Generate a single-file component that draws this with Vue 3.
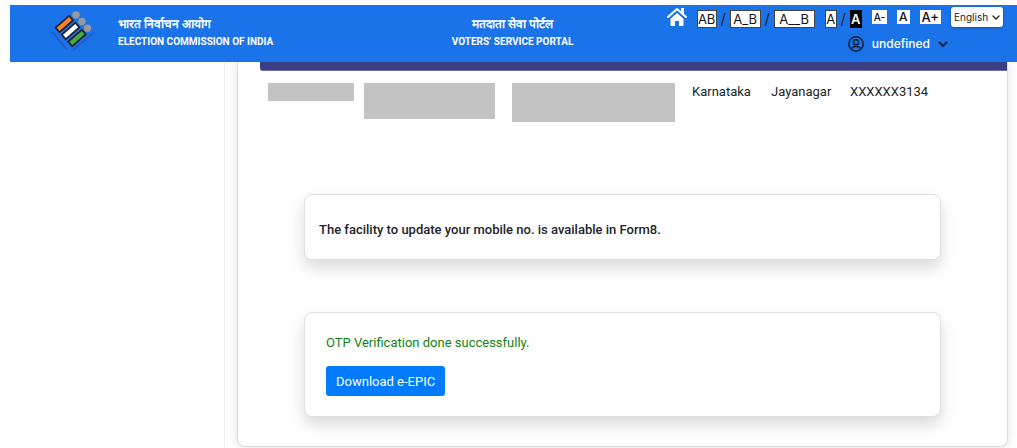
<script setup>
import {ref} from 'vue'

const language=ref('English')
const userName=ref('undefined')
const spacing=[
    {text:'AB',name:'tight'},
    {text:'A_B',name:'wide'},
    {text:'A__B',name:'wider'}
]
const sizes=[
    {text:'A-',name:'small'},
    {text:'A',name:'normal'},
    {text:'A+',name:'large'}
]
const voter={
    state:'Karnataka',
    constituency:'Jayanagar',
    mobile:'XXXXXX3134'
}
</script>
<template>
    <div class="page">
        <header class="topbar">
            <div class="brand">
                <svg class="logo" viewBox="0 0 44 42" aria-hidden="true">
                    <g fill="#98999d">
                        <circle cx="25" cy="3.900" r="3.700"/>
                        <circle cx="31" cy="10.500" r="3.700"/>
                        <circle cx="36.500" cy="17.300" r="3.700"/>
                    </g>
                    <g stroke="#20242e" stroke-width="1.800">
                        <rect x="-9" y="-3" width="18" height="6" fill="#f5822a" transform="translate(13.300 13) rotate(-41)"/>
                        <rect x="-9" y="-3" width="18" height="6" fill="#fff" transform="translate(19.600 20) rotate(-41)"/>
                        <rect x="-9" y="-3" width="18" height="6" fill="#43ae49" transform="translate(26 27) rotate(-41)"/>
                    </g>
                    <g fill="none" stroke="#2c4fb8" stroke-width="1.800" stroke-dasharray="1.500 .6">
                        <path d="M.800 20.500l15 18"/>
                        <path d="M22 39l20-16.500"/>
                    </g>
                </svg>
                <div class="title">
                    <p class="hindi">भारत निर्वाचन आयोग</p>
                    <p>ELECTION COMMISSION OF INDIA</p>
                </div>
            </div>
            <div class="title portal">
                <p class="hindi">मतदाता सेवा पोर्टल</p>
                <p>VOTERS’ SERVICE PORTAL</p>
            </div>
            <div class="controls">
                <div class="tools">
                    <a href="#" class="home" aria-label="Home">
                        <svg viewBox="0 0 20 19" aria-hidden="true">
                            <path d="M1 10L10 2l9 8" fill="none" stroke="#fff" stroke-width="2" stroke-linecap="round" stroke-linejoin="round"/>
                            <path d="M14 1h3v6l-3-2.600z" fill="#fff"/>
                            <path d="M3.500 11.800L10 6l6.500 5.800V18q0 1-1 1H12v-5H8v5H4.500q-1 0-1-1z" fill="#fff"/>
                        </svg>
                    </a>
                    <div class="group">
                        <template v-for="(item,index) in spacing" :key="item.name">
                            <span v-if="index>0" class="slash">/</span>
                            <button type="button" class="box" :class="item.name">{{item.text}}</button>
                        </template>
                    </div>
                    <div class="group">
                        <button type="button" class="box" aria-label="Light theme">A</button>
                        <span class="slash">/</span>
                        <button type="button" class="box dark" aria-label="Dark theme">A</button>
                    </div>
                    <div class="sizes">
                        <button v-for="item in sizes" :key="item.name" type="button" :class="item.name">{{item.text}}</button>
                    </div>
                    <div class="language">
                        <select v-model="language" aria-label="Language">
                            <option>English</option>
                        </select>
                        <svg viewBox="0 0 8 5" aria-hidden="true">
                            <path d="M1 1l3 3 3-3" fill="none" stroke="#222" stroke-width="1.300" stroke-linecap="round"/>
                        </svg>
                    </div>
                </div>
                <button type="button" class="user">
                    <svg class="avatar" viewBox="0 0 16 16" fill="none" stroke="#10213d" stroke-width="1.500" aria-hidden="true">
                        <circle cx="8" cy="8" r="7.200"/>
                        <circle cx="8" cy="6.300" r="2.600"/>
                        <path d="M3 13q1.500-2.600 5-2.600t5 2.600"/>
                    </svg>
                    <span>{{userName}}</span>
                    <svg class="arrow" viewBox="0 0 10 6" aria-hidden="true">
                        <path d="M1 1l4 4 4-4" fill="none" stroke="#10213d" stroke-width="1.800"/>
                    </svg>
                </button>
            </div>
        </header>
        <div class="content">
            <aside class="sidebar"></aside>
            <main class="main">
                <section class="card">
                    <div class="table_box">
                        <div class="table_head"></div>
                        <table>
                            <tbody>
                                <tr>
                                    <td class="c_epic"><div class="hidden short"></div></td>
                                    <td class="c_name"><div class="hidden medium"></div></td>
                                    <td class="c_relative"><div class="hidden long"></div></td>
                                    <td class="c_text">{{voter.state}}</td>
                                    <td class="c_text">{{voter.constituency}}</td>
                                    <td>{{voter.mobile}}</td>
                                </tr>
                            </tbody>
                        </table>
                    </div>
                    <div class="panel notice">
                        <p>The facility to update your mobile no. is available in Form8.</p>
                    </div>
                    <div class="panel otp">
                        <p>OTP Verification done successfully.</p>
                        <button type="button" class="download">Download e-EPIC</button>
                    </div>
                </section>
            </main>
        </div>
    </div>
</template>
<style>
body{
    margin: 0;
    background-color: #fff;
}
</style>
<style scoped>
*{
    box-sizing: border-box;
}
p{
    margin: 0;
}
button,select{
    border: 0;
    padding: 0;
    font-family: inherit;
    cursor: pointer;
}
svg{
    display: block;
}
.page{
    display: flex;
    flex-direction: column;
    min-height: 100vh;
    padding-top: 5px;
    font-family: Roboto,"Liberation Sans",sans-serif;
    color: #212529;
}
.topbar{
    display: grid;
    grid-template-columns: 1fr auto 1fr;
    height: 57px;
    margin-left: 10px;
    padding-right: 2px;
    background-color: #1a73e8;
    position: relative;
    z-index: 1;
}
.brand{
    display: flex;
    gap: 23px;
    padding-left: 41px;
}
.logo{
    width: 44px;
    height: 42px;
    margin-top: 6px;
}
.title{
    padding-top: 11px;
    color: #fff;
    font-size: 10px;
    font-weight: 700;
    line-height: 17px;
    white-space: nowrap;
}
.title .hindi{
    font-size: 12px;
}
.portal{
    text-align: center;
}
.controls{
    display: flex;
    flex-direction: column;
    align-items: flex-end;
    padding: 2px 12px 0 0;
    font-family: Inter,"Open Sans",sans-serif;
}
.tools{
    display: flex;
    align-items: flex-start;
    gap: 10px;
}
.home{
    width: 20px;
}
.group{
    display: flex;
    align-items: center;
    padding-top: 3px;
}
.box{
    min-width: 12px;
    height: 18px;
    border: 1px solid #444;
    background-color: #fff;
    color: #111;
    font-size: 13px;
    line-height: 16px;
}
.box.tight{
    min-width: 20px;
}
.box.wide{
    min-width: 31px;
}
.box.wider{
    min-width: 41px;
}
.box.dark{
    background-color: #000;
    border-color: #000;
    color: #fff;
    font-weight: 600;
}
.slash{
    width: 13px;
    text-align: center;
    font-size: 15px;
    line-height: 18px;
}
.sizes{
    display: flex;
    gap: 10px;
    padding-top: 3px;
}
.sizes button{
    height: 14px;
    padding: 0 2px;
    background-color: #fff;
    color: #111;
    line-height: 14px;
    font-weight: 500;
}
.sizes .small{
    font-size: 10px;
}
.sizes .normal{
    font-size: 12px;
}
.sizes .large{
    font-size: 13px;
}
.language{
    position: relative;
}
.language select{
    display: block;
    appearance: none;
    width: 52px;
    height: 20px;
    padding-left: 3px;
    border-radius: 3px;
    background-color: #fff;
    box-shadow: 0 1px 3px rgba(0,0,0,.3);
    color: #222;
    font-size: 10px;
}
.language svg{
    position: absolute;
    top: 8px;
    right: 3px;
    width: 8px;
    height: 5px;
    pointer-events: none;
}
.user{
    display: flex;
    align-items: center;
    gap: 8px;
    margin: 8px 55px 0 0;
    background: none;
    color: #fff;
    font-size: 12px;
    font-weight: 500;
    line-height: 16px;
}
.avatar{
    width: 16px;
    height: 16px;
}
.arrow{
    width: 10px;
    height: 6px;
}
.content{
    display: flex;
    flex: 1;
}
.sidebar{
    width: 225px;
    border-right: 1px solid #f0f0f0;
}
.main{
    flex: 1;
    min-width: 0;
    padding: 0 9px 1px 12px;
    overflow: hidden;
}
.card{
    padding-bottom: 29px;
    border: 1px solid #dcdcdc;
    border-top: 0;
    border-radius: 0 0 8px 8px;
    background-color: #fff;
    box-shadow: 0 0 12px rgba(0,0,0,.12);
}
.table_box{
    height: 132px;
    padding-left: 22px;
}
.table_head{
    height: 9px;
    border-bottom: 1px solid #6a6eab;
    border-radius: 0 0 0 3px;
    background-color: #3b4086;
}
table{
    width: 100%;
    table-layout: fixed;
    border-collapse: collapse;
}
td{
    padding: 12px 0 0 8px;
    font-size: 13px;
    line-height: 18px;
    vertical-align: top;
}
.c_epic{
    width: 96px;
}
.c_name{
    width: 148px;
}
.c_relative{
    width: 180px;
}
.c_text{
    width: 79px;
}
.hidden{
    background-color: #c3c3c3;
}
.short{
    width: 86px;
    height: 18px;
}
.medium{
    width: 131px;
    height: 36px;
}
.long{
    width: 163px;
    height: 39px;
}
.panel{
    margin: 0 66px;
    border: 1px solid #dfdfdf;
    border-radius: 8px;
    background-color: #fff;
    box-shadow: 0 8px 16px rgba(0,0,0,.15);
    font-size: 13px;
    line-height: 20px;
}
.notice{
    padding: 25px 14px 19px;
    font-weight: 500;
}
.otp{
    margin-top: 52px;
    padding: 20px 21px;
}
.otp p{
    color: #138213;
}
.download{
    height: 30px;
    margin-top: 13px;
    padding: 0 10px;
    border-radius: 3px;
    background-color: #007bff;
    color: #fff;
    font-size: 13px;
}
</style>
